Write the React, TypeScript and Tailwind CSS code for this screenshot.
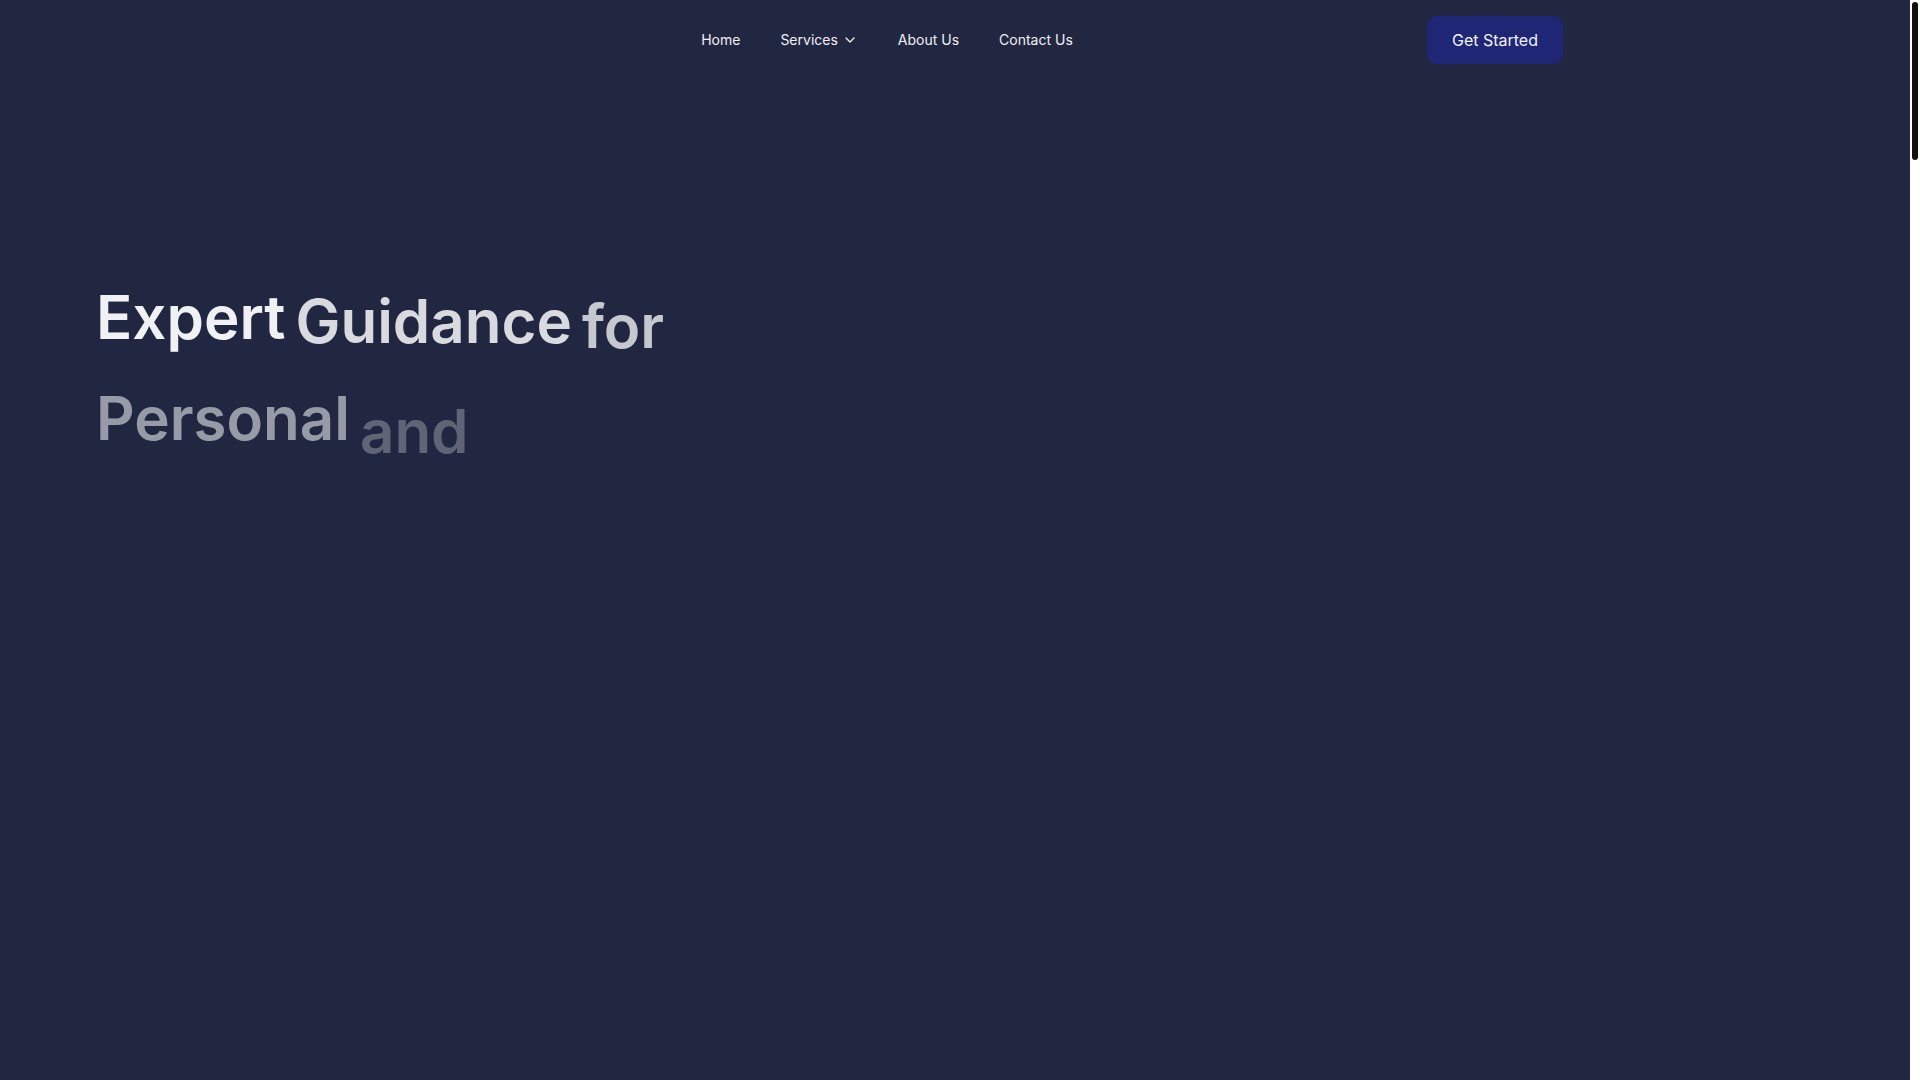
import React from 'react';
import { ChevronDown } from 'lucide-react';

// words of the hero title, caught mid-animation (fading and rising in one by one)
const heroWords: { text: string; className: string }[] = [
    { text: 'Expert', className: 'opacity-100 translate-y-0' },
    { text: 'Guidance', className: 'opacity-[0.89] translate-y-[4px]' },
    { text: 'for', className: 'opacity-[0.8] translate-y-[9px]' },
    { text: 'Personal', className: 'opacity-[0.57] translate-y-[17px]' },
    { text: 'and', className: 'opacity-[0.3] translate-y-[30px]' },
];

const navLinks = ['Home', 'Services', 'About Us', 'Contact Us'];

const Header: React.FC = () => (
    <header className="h-20">
        <div className="max-w-7xl mx-auto px-8 h-full flex items-center justify-between">
            <div />
            <nav className="flex items-center gap-10 text-sm text-[#eef0f5]">
                {navLinks.map((link) =>
                    link === 'Services' ? (
                        <button key={link} className="flex items-center gap-1">
                            <span>{link}</span>
                            <ChevronDown className="w-4 h-4" strokeWidth={2} />
                        </button>
                    ) : (
                        <a key={link} href="#" className="hover:text-white transition-colors">
                            {link}
                        </a>
                    )
                )}
            </nav>
            <a
                href="#"
                className="px-[25px] py-3 rounded-[10px] bg-[#1f2676] text-base leading-6 text-[#f0f1f6] hover:bg-[#262e8a] transition-colors"
            >
                Get Started
            </a>
        </div>
    </header>
);

// page scrollbar as it appears in the window: white track, thin dark thumb
const ScrollTrack: React.FC = () => (
    <div className="w-[10px] shrink-0 bg-white px-[2px] pt-[2px]">
        <div className="h-[158px] rounded-full bg-[#111111]" />
    </div>
);

export default function App() {
    return (
        <div className="flex h-screen bg-[#222741] font-['Inter','Noto_Sans',sans-serif]">
            <div className="flex-1 overflow-y-auto [scrollbar-width:none]">
                <Header />
                <main className="min-h-[7120px]">
                    <section className="px-24 pt-[207px]">
                        <h1 className="max-w-3xl flex flex-wrap gap-x-2.5 gap-y-6 text-6xl leading-none font-semibold text-[#f0f1f4]">
                            {heroWords.map((word) => (
                                <span key={word.text} className={`inline-block ${word.className}`}>
                                    {word.text}
                                </span>
                            ))}
                        </h1>
                    </section>
                </main>
            </div>
            <ScrollTrack />
        </div>
    );
}
